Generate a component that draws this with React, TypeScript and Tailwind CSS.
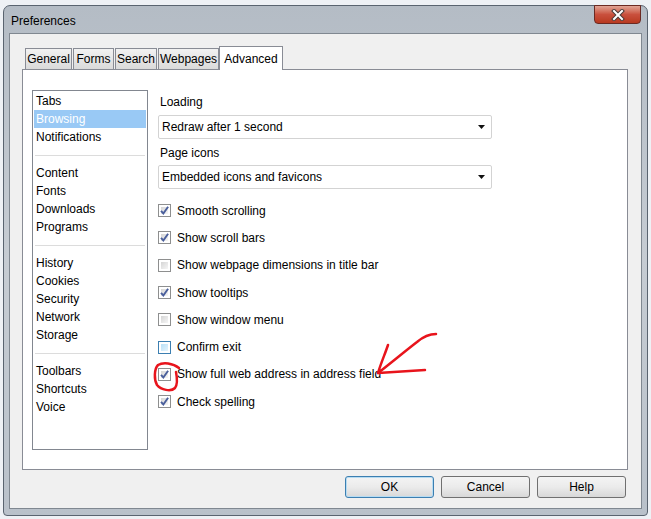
import React from "react";

const groups: string[][] = [
  ["Tabs", "Browsing", "Notifications"],
  ["Content", "Fonts", "Downloads", "Programs"],
  ["History", "Cookies", "Security", "Network", "Storage"],
  ["Toolbars", "Shortcuts", "Voice"],
];

const options = [
  { label: "Smooth scrolling", checked: true },
  { label: "Show scroll bars", checked: true },
  { label: "Show webpage dimensions in title bar", checked: false },
  { label: "Show tooltips", checked: true },
  { label: "Show window menu", checked: false },
  { label: "Confirm exit", checked: false, hover: true },
  { label: "Show full web address in address field", checked: true },
  { label: "Check spelling", checked: true },
];

const tabs = [
  { name: "General", w: "w-[47px]" },
  { name: "Forms", w: "w-[41px]" },
  { name: "Search", w: "w-[42px]" },
  { name: "Webpages", w: "w-[61px]" },
];

function Checkbox({ checked, hover }: { checked: boolean; hover?: boolean }) {
  return (
    <div
      className={
        "w-[13px] h-[13px] shrink-0 border p-[2px] " +
        (hover ? "border-[#3c7fb1] bg-white" : "border-[#8e8f8f] bg-white")
      }
    >
      <div
        className={
          "w-full h-full relative " +
          (hover
            ? "bg-gradient-to-br from-[#b9e0f7] to-[#e4f4fc]"
            : "bg-gradient-to-br from-[#d5d5d5] to-[#f6f6f6]")
        }
      >
        {checked && (
          <svg viewBox="0 0 7 7" className="absolute -left-[1px] -top-[1px] w-[9px] h-[9px]">
            <path d="M0.8 3.8 L2.6 5.8 L6.3 0.6" fill="none" stroke="#4a5f9c" strokeWidth="1.5" />
          </svg>
        )}
      </div>
    </div>
  );
}

function Dropdown({ value }: { value: string }) {
  return (
    <div className="h-[24px] w-[334px] border border-[#d3d3d3] rounded-[2px] bg-white flex items-center justify-between pl-[3px] pr-[6px]">
      <span>{value}</span>
      <svg width="7" height="4" viewBox="0 0 7 4">
        <path d="M0 0 H7 L3.5 4 Z" fill="#111" />
      </svg>
    </div>
  );
}

function Button({ label, focused }: { label: string; focused?: boolean }) {
  return (
    <div
      className={
        "w-[89px] h-[22px] rounded-[3px] border flex items-center justify-center bg-gradient-to-b from-[#f4f4f4] via-[#ebebeb] to-[#d8d8d8] " +
        (focused ? "border-[#3c7fb1] shadow-[inset_0_0_0_1px_#b7dcf2]" : "border-[#707070]")
      }
    >
      {label}
    </div>
  );
}

export default function App() {
  return (
    <div className="w-[651px] h-[519px] bg-[#eef1f5] relative overflow-hidden font-['Liberation_Sans',Arial,sans-serif] text-[12px] text-black">
      <div className="ml-[3px] mt-[5px] w-[645px] h-[511px] rounded-t-[7px] rounded-b-[4px] border border-[#5a6470] bg-gradient-to-b from-[#b4bcc5] via-[#c6ccd3] to-[#b9c1ca] flex flex-col px-[5px] pb-[6px]">
        {/* title bar */}
        <div className="h-[27px] shrink-0 flex items-center justify-between">
          <span className="pl-[2px] pt-[2px]">Preferences</span>
          <div className="w-[47px] h-[19px] self-start -mt-px mr-px rounded-b-[4px] border border-[#6b2a23] bg-gradient-to-b from-[#e0a496] via-[#c9503d] to-[#b8391f] flex items-center justify-center">
            <svg width="14" height="12" viewBox="0 0 14 12">
              <path d="M3 2 L11 10 M11 2 L3 10" stroke="#4a3a38" strokeWidth="4" strokeLinecap="square" />
              <path d="M3 2 L11 10 M11 2 L3 10" stroke="#ffffff" strokeWidth="2" strokeLinecap="square" />
            </svg>
          </div>
        </div>

        {/* client area */}
        <div className="h-[476px] shrink-0 bg-[#f0f0f0] border border-[#808891] px-[12px] pt-[12px] pb-[10px] flex flex-col">
          <div className="flex items-end pl-[3px] h-[23px] shrink-0">
            {tabs.map((t) => (
              <div
                key={t.name}
                className={
                  t.w +
                  " h-[21px] mr-px border border-b-0 border-[#898c95] bg-gradient-to-b from-[#f2f2f2] to-[#dadada] flex items-center justify-center"
                }
              >
                {t.name}
              </div>
            ))}
            <div className="w-[64px] h-[24px] -mb-px -ml-[1px] relative z-10 border border-b-0 border-[#898c95] bg-white flex items-start justify-center pt-[3px]">
              Advanced
            </div>
          </div>

          <div className="w-[606px] h-[401px] shrink-0 border border-[#898c95] bg-white flex pl-[9px] pt-[20px] pb-[19px]">
            {/* category list */}
            <div className="w-[116px] border border-[#828790] pt-px flex flex-col">
              {groups.map((g, gi) => (
                <div key={gi}>
                  {gi > 0 && (
                    <div className="h-[18px] flex items-center mx-[2px]">
                      <div className="w-full h-px bg-[#dcdcdc]" />
                    </div>
                  )}
                  {g.map((item) => (
                    <div
                      key={item}
                      className={
                        "h-[18px] leading-[18px] mx-px px-[2px] " +
                        (item === "Browsing" ? "bg-[#99c9f5] text-white" : "")
                      }
                    >
                      {item}
                    </div>
                  ))}
                </div>
              ))}
            </div>

            {/* settings */}
            <div className="ml-[10px] flex flex-col">
              <div className="h-[18px] leading-[18px] mt-[3px] pl-[2px]">Loading</div>
              <div className="mt-[4px]">
                <Dropdown value="Redraw after 1 second" />
              </div>
              <div className="h-[18px] leading-[18px] mt-[5px] pl-[2px]">Page icons</div>
              <div className="mt-[3px]">
                <Dropdown value="Embedded icons and favicons" />
              </div>
              <div className="mt-[8px] flex flex-col">
                {options.map((o) => (
                  <div key={o.label} className="h-[27.3px] flex items-center gap-[6px]">
                    <Checkbox checked={o.checked} hover={o.hover} />
                    <span>{o.label}</span>
                  </div>
                ))}
              </div>
            </div>
          </div>

          <div className="flex justify-end gap-[7px] mt-[6px] pr-[3px] shrink-0">
            <Button label="OK" focused />
            <Button label="Cancel" />
            <Button label="Help" />
          </div>
        </div>
      </div>

      {/* hand-drawn red annotations */}
      <svg className="absolute left-0 top-0 pointer-events-none" width="651" height="519" viewBox="0 0 651 519">
        <path
          d="M179 368 C173 363 163 362 158 365 C154 369 154 380 157 385 C161 390 171 392 175 388 C178 384 177 377 176 372"
          fill="none"
          stroke="#e8141c"
          strokeWidth="2.5"
          strokeLinecap="round"
        />
        <path
          d="M378 373 C391 363 404 352 417 342 C424 336 430 334 436 334"
          fill="none"
          stroke="#e8141c"
          strokeWidth="2.5"
          strokeLinecap="round"
        />
        <path
          d="M388 345 C385 354 381 363 378 373 C393 372 409 371 425 370"
          fill="none"
          stroke="#e8141c"
          strokeWidth="2.5"
          strokeLinecap="round"
          strokeLinejoin="round"
        />
      </svg>
    </div>
  );
}
